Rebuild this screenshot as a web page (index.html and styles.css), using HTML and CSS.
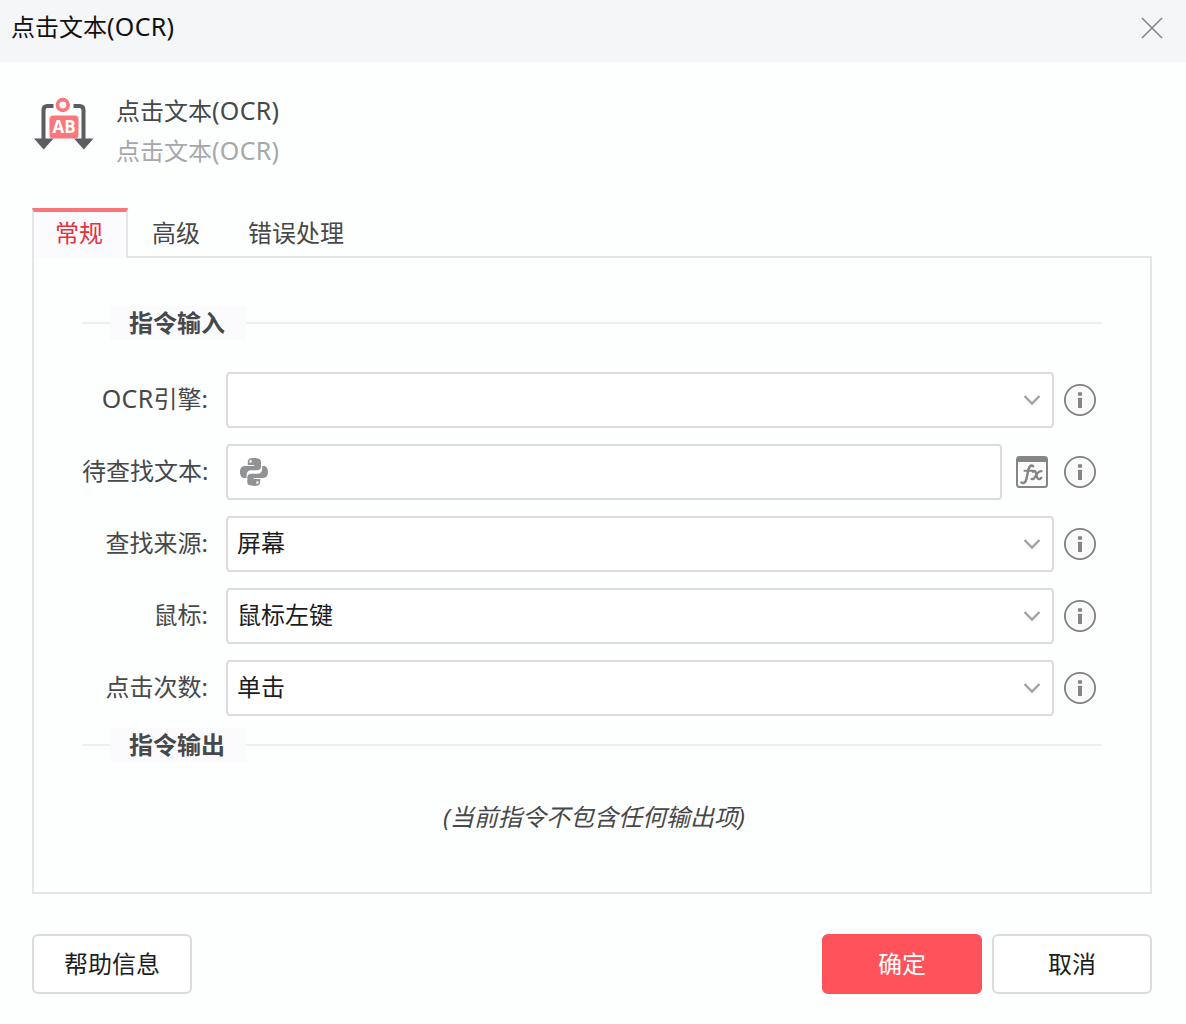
FILE: index.html
```html
<!DOCTYPE html>
<html lang="zh-CN">
<head>
<meta charset="utf-8">
<title>点击文本(OCR)</title>
<link rel="stylesheet" href="styles.css">
</head>
<body>
<svg class="sprite" aria-hidden="true">
  <symbol id="info" viewBox="0 0 32 32">
    <circle cx="16" cy="16" r="15.1" fill="#fafafb" stroke="#858587" stroke-width="1.9"/>
    <path d="M14 8.3h4v3.4h-4zM14 13.7h4v10.2h-4z" fill="#858587"/>
  </symbol>
  <symbol id="chevron" viewBox="0 0 18 12">
    <path d="M1.5 2 9 9.5 16.5 2" fill="none" stroke="#a0a1a2" stroke-width="2.3"/>
  </symbol>
</svg>
<div class="dialog">
  <header class="titlebar">
    <span>点击文本<span class="latin">(OCR)</span></span>
    <svg class="close" viewBox="0 0 22 22"><path d="M1 1 21 21M21 1 1 21" stroke="#858688" stroke-width="1.6"/></svg>
  </header>
  <section class="summary">
    <svg class="command-icon" viewBox="0 0 60 56">
      <path d="M19.500 9H13.500Q9.500 9 9.500 13V42M39.500 9H45.500Q49.500 9 49.500 13V42" fill="none" stroke="#5b5d60" stroke-width="4"/>
      <path d="M0 41.500h19.500L9.700 52.500zM40 41.500h19.500L49.800 52.500z" fill="#5b5d60"/>
      <rect x="15.500" y="18.500" width="29" height="23" rx="3.500" fill="#fa787b"/>
      <circle cx="28.800" cy="8" r="5.300" fill="#fff" stroke="#fa787b" stroke-width="3.800"/>
      <text class="badge-text" x="30" y="35.500" text-anchor="middle" textLength="23" lengthAdjust="spacingAndGlyphs">AB</text>
    </svg>
    <div class="names">
      <div>点击文本<span class="latin">(OCR)</span></div>
      <div class="muted">点击文本<span class="latin">(OCR)</span></div>
    </div>
  </section>
  <nav class="tabs">
    <div class="tab active">常规</div>
    <div class="tab">高级</div>
    <div class="tab">错误处理</div>
  </nav>
  <main class="panel">
    <div class="legend"><span>指令输入</span></div>
    <div class="form">
      <div class="row">
        <label><span class="latin">OCR</span>引擎:</label>
        <div class="field"><span></span><svg class="chevron"><use href="#chevron"/></svg></div>
        <svg class="info"><use href="#info"/></svg>
      </div>
      <div class="row">
        <label>待查找文本:</label>
        <div class="field text-field">
          <svg class="python" viewBox="0 0 28 28" fill="#919294">
            <path d="M13.800 0C9.400 0 7.800 1.400 7.800 3.900V7H14.200V8.100H4.600C1.700 8.100 0 10.300 0 14s1.700 6 4.300 6H6.600V16.800c0-2.600 2-4.500 4.500-4.500h6.200c2.100 0 3.700-1.700 3.700-3.800V3.900C21 1.300 18.600 0 13.800 0zM10.600 2.100a1.300 1.300 0 1 1 0 2.600 1.300 1.300 0 0 1 0-2.600z"/>
            <path d="M14.200 28c4.400 0 6-1.400 6-3.900V21H13.800V19.900H23.400C26.300 19.900 28 17.700 28 14s-1.700-6-4.300-6H22.200V11.200c0 2.600-2 4.500-4.500 4.500H11c-2.100 0-3.700 1.700-3.700 3.800V24.100C7.300 26.700 9.400 28 14.200 28zM17.400 25.900a1.300 1.300 0 1 1 0-2.600 1.300 1.300 0 0 1 0 2.600z"/>
          </svg>
        </div>
        <svg class="fx" viewBox="0 0 32 32">
          <rect x="1" y="1" width="30" height="30" rx="2.500" fill="#fbfbfc" stroke="#858587" stroke-width="2"/>
          <path d="M1 3Q1 1 3 1H29Q31 1 31 3V6H1z" fill="#858587"/>
          <g fill="none" stroke="#858587" stroke-linecap="round">
            <path d="M17.200 10.300C14.600 8.500 13.100 10.500 12.300 14.200L10.400 23C9.700 26.300 7.800 28 5.500 26.500" stroke-width="2.500"/>
            <path d="M8.500 14.800H16.500" stroke-width="2"/>
            <path d="M16.800 15.700C19.700 13.300 20 17 20.700 20C21.400 23.300 23 24 25.300 21.800" stroke-width="2.400"/>
            <path d="M25.500 15.200C22.500 14.700 20 19 18.800 21.300C17.900 23.200 16.600 23.400 15.500 22.900" stroke-width="2.200"/>
          </g>
        </svg>
        <svg class="info"><use href="#info"/></svg>
      </div>
      <div class="row">
        <label>查找来源:</label>
        <div class="field"><span>屏幕</span><svg class="chevron"><use href="#chevron"/></svg></div>
        <svg class="info"><use href="#info"/></svg>
      </div>
      <div class="row">
        <label>鼠标:</label>
        <div class="field"><span>鼠标左键</span><svg class="chevron"><use href="#chevron"/></svg></div>
        <svg class="info"><use href="#info"/></svg>
      </div>
      <div class="row">
        <label>点击次数:</label>
        <div class="field"><span>单击</span><svg class="chevron"><use href="#chevron"/></svg></div>
        <svg class="info"><use href="#info"/></svg>
      </div>
    </div>
    <div class="legend output"><span>指令输出</span></div>
    <p class="empty">(当前指令不包含任何输出项)</p>
  </main>
  <footer class="actions">
    <button class="button help">帮助信息</button>
    <button class="button primary">确定</button>
    <button class="button">取消</button>
  </footer>
</div>
</body>
</html>
```
FILE: styles.css
```css
* { box-sizing: border-box; }
body {
  margin: 0;
  background: #fdfefe;
  color: #47484a;
  font: 24px/32px "Noto Sans", "Noto Sans CJK SC", sans-serif;
}
svg { display: block; flex: none; }
.sprite { display: none; }
.dialog { height: 1024px; overflow: hidden; }
.latin { font-size: 25px; line-height: 1; letter-spacing: 0.3px; }
.titlebar {
  height: 62px;
  padding: 0 23px 8px 11px;
  display: flex;
  align-items: center;
  justify-content: space-between;
  background: #f5f6f8;
  color: #111;
}
.close { width: 22px; height: 22px; margin-top: 2px; }
.summary { display: flex; height: 146px; padding: 34px 0 0 34px; }
.command-icon { width: 60px; height: 56px; margin-top: 1px; }
.badge-text { font: bold 17px "Open Sans", sans-serif; fill: #fff; }
.names { margin-left: 22px; line-height: 40px; margin-top: -5px; }
.muted { color: #a7a8aa; }
.tabs { display: flex; height: 50px; margin: 0 32px; }
.tab { padding: 9px 24px 0; }
.tab.active {
  width: 96px;
  padding: 5px 0 0 21px;
  border: 2px solid #e3e5e8;
  border-top: 4px solid #fa7578;
  border-bottom: 0;
  background: #fbfbfe;
  color: #e8303f;
  position: relative;
}
.panel {
  width: 1120px;
  height: 638px;
  margin: -2px 0 0 32px;
  padding: 48px 48px 0;
  border: 2px solid #e3e5e8;
}
.legend {
  display: flex;
  align-items: center;
  height: 34px;
  font-weight: bold;
}
.legend::before, .legend::after { content: ""; height: 2px; background: #eceef0; }
.legend::before { width: 28px; }
.legend::after { flex: 1; }
.legend span { width: 136px; padding-left: 19px; height: 34px; line-height: 34px; background: #fbfbfe; }
.form { display: grid; gap: 16px; padding-top: 32px; }
.row { display: flex; align-items: center; height: 56px; }
.row label { width: 126px; margin-right: 18px; padding-bottom: 2px; text-align: right; white-space: nowrap; display: block; direction: ltr; }
.field {
  width: 828px;
  height: 56px;
  padding: 0 11px 2px 9px;
  display: flex;
  align-items: center;
  justify-content: space-between;
  border: 2px solid #dadcde;
  border-radius: 4px;
  background: #fff;
  color: #1c1d1f;
}
.text-field { width: 776px; padding: 0 12px; }
.chevron { width: 18px; height: 12px; margin-top: 1px; }
.python { width: 28px; height: 28px; }
.fx { width: 32px; height: 32px; margin-left: 14px; }
.info { width: 32px; height: 32px; margin-left: 10px; overflow: visible; }
.text-field ~ .info { margin-left: 16px; }
.output { margin-top: 12px; }
.empty { margin: 39px 0 0 4px; text-align: center; font-style: italic; }
.actions { display: flex; gap: 10px; padding: 40px 34px 0 32px; }
.button {
  width: 160px;
  height: 60px;
  padding: 0;
  border: 2px solid #dadbde;
  border-radius: 6px;
  background: #fff;
  color: #1c1d1f;
  font: inherit;
}
.help { margin-right: auto; }
.primary { border-color: #ff525b; background: #ff525b; color: #fff; }
```
